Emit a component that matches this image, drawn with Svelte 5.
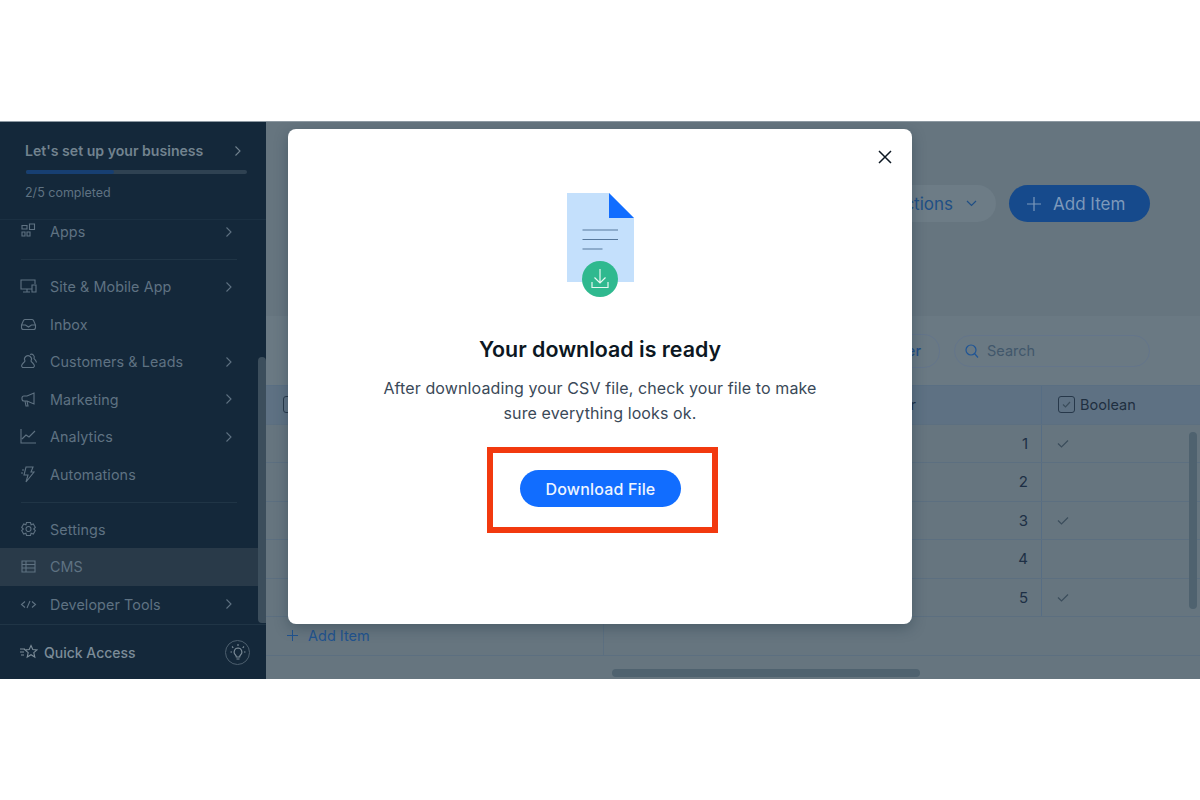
<script>
  // Download-ready dialog sitting on top of a dimmed CMS dashboard
  const navGroups = [
    [{ label: 'Apps', icon: 'apps', more: true }],
    [
      { label: 'Site & Mobile App', icon: 'site', more: true },
      { label: 'Inbox', icon: 'inbox' },
      { label: 'Customers & Leads', icon: 'people', more: true },
      { label: 'Marketing', icon: 'megaphone', more: true },
      { label: 'Analytics', icon: 'chart', more: true },
      { label: 'Automations', icon: 'bolt' }
    ],
    [
      { label: 'Settings', icon: 'gear' },
      { label: 'CMS', icon: 'table', active: true },
      { label: 'Developer Tools', icon: 'code', more: true }
    ]
  ];

  const icons = {
    apps: 'M3 7h5V3.500H3zM3 14h3v-4H3zM8 14h3v-4H8zM10.500 7.500h5V2h-5z',
    site: 'M13 12H2V3h14v4M8 12v3M4 15h7M13 8h4v7h-4z',
    inbox: 'M2.500 10l2-4.500a2 2 0 0 1 2-1h6a2 2 0 0 1 2 1l2 4.500v2.500a2 2 0 0 1-2 2h-10a2 2 0 0 1-2-2zM2.500 10h4l3 2 3-2h4',
    people: 'M6 9a3.500 3.500 0 1 1 6 0c1 2 3 2 3.500 5l-1 1.500H3.500l-1-1.500C3 11 5 11 6 9zM11 2.500a3 3 0 0 1 4 4c1 1.500 2 2 2.500 4',
    megaphone: 'M5 6h3l7-3v11l-7-3H5a2 2 0 0 1-2-2V8a2 2 0 0 1 2-2zM6 11l1 5h2l-1-5',
    chart: 'M2 2v14h15M3 12l4-4 3 2 6-6',
    bolt: 'M7 2h7l-2 5h3l-8 10 2-7H5zM3 5h2M2 8h2',
    gear: 'M9.500 6.500a2.500 2.500 0 1 0 0 5 2.500 2.500 0 0 0 0-5zM7.500 2.500h4l.6 2.200 2.200-.8 2 3.400L14.700 9l1.600 1.700-2 3.400-2.200-.8-.6 2.200h-4l-.6-2.200-2.200.8-2-3.400L4.300 9 2.700 7.300l2-3.400 2.200.8z',
    table: 'M3 4h13v11H3zM3 7.500h13M3 11h13M7 4v11',
    code: 'M6 6.500L2.500 9.500 6 12.500M13 6.500l3.500 3-3.500 3M11 6L8 13'
  };

  const rows = [
    { n: 1, on: true },
    { n: 2, on: false },
    { n: 3, on: true },
    { n: 4, on: false },
    { n: 5, on: true }
  ];
</script>

<div class="page">
  <div class="frame">
    <aside class="sidebar">
      <div class="setup">
        <div class="setup-title">
          <span>Let's set up your business</span>
          <svg width="8" height="12" viewBox="0 0 8 12"><path d="M1.500 1.500L6 6l-4.500 4.500" /></svg>
        </div>
        <div class="progress"><div class="progress-fill" style="width: 40%"></div></div>
        <div class="setup-sub">2/5 completed</div>
      </div>

      <nav class="nav">
        {#each navGroups as group, i}
          <ul class="nav-group" class:first={i === 0}>
            {#each group as item}
              <li class="nav-item" class:active={item.active}>
                <svg class="nav-icon" width="19" height="19" viewBox="0 0 19 19"><path d={icons[item.icon]} /></svg>
                <span class="nav-label">{item.label}</span>
                {#if item.more}
                  <svg class="chev" width="8" height="12" viewBox="0 0 8 12"><path d="M1.500 1.500L6 6l-4.500 4.500" /></svg>
                {/if}
              </li>
            {/each}
          </ul>
        {/each}
        <div class="nav-scroll"></div>
      </nav>

      <div class="quick">
        <svg class="quick-icon" width="18" height="16" viewBox="0 0 18 16"><path d="M0 5h5M0 8h4M1 11h3M11 1.500l1.800 4 4.200.4-3.200 2.800 1 4.300-3.800-2.300-3.800 2.300 1-4.300L5 5.900l4.200-.4z" /></svg>
        <span class="quick-label">Quick Access</span>
        <span class="bulb">
          <svg width="18" height="18" viewBox="0 0 18 18"><path d="M9 5a4 4 0 0 0-2.500 7c.6.600.8 1.200.8 2h3.400c0-.8.2-1.400.8-2A4 4 0 0 0 9 5zM7.500 16h3M9 1v2M3 3.500l1.300 1.300M15 3.500l-1.300 1.300M1.500 9h1.500M15 9h1.500" /></svg>
        </span>
      </div>
    </aside>

    <main class="main">
      <header class="head">
        <button class="pill ghost">More Actions
          <svg width="11" height="7" viewBox="0 0 11 7"><path d="M1 1l4.500 4.500L10 1" /></svg>
        </button>
        <button class="pill primary">
          <svg width="16" height="16" viewBox="0 0 16 16"><path d="M8 1v14M1 8h14" /></svg>
          Add Item
        </button>
      </header>

      <section class="tools">
        <span class="filter">Filter</span>
        <div class="search">
          <svg width="16" height="16" viewBox="0 0 16 16"><circle cx="7" cy="7" r="5" /><path d="M10.500 10.500L14 14.500" /></svg>
          <span>Search</span>
        </div>
      </section>

      <section class="table">
        <div class="tr th">
          <div class="cell first"><span class="box small"></span></div>
          <div class="cell num-head">Number</div>
          <div class="cell bool">
            <span class="box">
              <svg width="9" height="7" viewBox="0 0 9 7"><path d="M1 3.500L3.500 6 8 1" /></svg>
            </span>
            Boolean
          </div>
        </div>
        {#each rows as row}
          <div class="tr">
            <div class="cell first"></div>
            <div class="cell num">{row.n}</div>
            <div class="cell bool">
              {#if row.on}
                <svg class="tick" width="12" height="9" viewBox="0 0 12 9"><path d="M1 4.500L4.500 8 11 1.500" /></svg>
              {/if}
            </div>
          </div>
        {/each}
        <div class="tr">
          <div class="cell first add">
            <svg width="11" height="11" viewBox="0 0 11 11"><path d="M5.500 0v11M0 5.500h11" /></svg>
            <span>Add Item</span>
          </div>
          <div class="cell plain"></div>
        </div>
        <div class="tail"><div class="hbar"></div></div>
        <div class="vbar"></div>
      </section>
    </main>

    <div class="modal">
      <button class="close" aria-label="Close">
        <svg width="14" height="14" viewBox="0 0 14 14"><path d="M1 1l12 12M13 1L1 13" /></svg>
      </button>

      <svg class="art" width="68" height="104" viewBox="0 0 68 104">
        <path d="M0 0h42l25 25v64H0z" fill="#c4e0fc" />
        <path d="M42 0l25 25H42z" fill="#116dff" />
        <path d="M15.500 37h35.500M15.500 46.500h35.500M15.500 56h20" stroke="#56789c" stroke-width="1.200" fill="none" />
        <circle cx="33" cy="86" r="18" fill="#2fb98f" />
        <path d="M33 76v13.500M27.500 84.500l5.500 5.500 5.500-5.500M25 89v5.500h16V89" stroke="#e6f7f1" stroke-width="1.200" fill="none" />
      </svg>

      <h2>Your download is ready</h2>
      <p>After downloading your CSV file, check your file to make<br />sure everything looks ok.</p>

      <div class="callout">
        <button class="download">Download File</button>
      </div>
    </div>
  </div>
</div>

<style>
  :global(body) {
    margin: 0;
    background: #fff;
  }

  .page {
    height: 800px;
    padding-top: 121px;
    box-sizing: border-box;
    font-family: Inter, "Liberation Sans", sans-serif;
  }

  .frame {
    position: relative;
    height: 558px;
    display: flex;
    background: #66757f;
    border-top: 1px solid #8d99a2;
    box-sizing: border-box;
    overflow: hidden;
  }

  /* sidebar */
  .sidebar {
    width: 266px;
    flex: none;
    display: flex;
    flex-direction: column;
    background: #14283a;
    color: #5f7282;
    font-size: 14.300px;
  }

  .sidebar svg path {
    fill: none;
    stroke: currentColor;
    stroke-width: 1.100;
  }

  .setup {
    height: 98px;
    box-sizing: border-box;
    padding: 20px 19px 0 25px;
    border-bottom: 1px solid #1b3042;
  }

  .setup-title {
    display: flex;
    justify-content: space-between;
    align-items: center;
    font-weight: 600;
    color: #72838f;
    font-size: 14.100px;
    line-height: 18px;
    padding-right: 5px;
  }

  .progress {
    height: 4px;
    margin: 10px 0 0 1px;
    background: #2f4252;
    border-radius: 2px;
    width: 221px;
  }

  .progress-fill {
    height: 100%;
    background: #173f72;
    border-radius: 2px;
  }

  .setup-sub {
    margin-top: 11px;
    font-size: 12.500px;
    line-height: 16px;
  }

  .nav {
    position: relative;
    flex: 1;
    min-height: 0;
  }

  .nav-group {
    list-style: none;
    margin: 0;
    padding: 0;
  }

  .nav-group + .nav-group {
    margin-top: 8.500px;
    padding-top: 9px;
    position: relative;
  }

  .nav-group + .nav-group::before {
    content: "";
    position: absolute;
    top: 0;
    left: 21px;
    width: 216px;
    height: 1px;
    background: #203546;
  }

  .nav-group.first {
    margin-top: -7px;
  }

  .nav-item {
    display: flex;
    align-items: center;
    height: 37.500px;
    padding: 0 33px 0 19px;
  }

  .nav-item.active {
    background: #293a49;
    margin-right: 8px;
    padding-right: 25px;
  }

  .nav-icon {
    flex: none;
  }

  .nav-label {
    flex: 1;
    margin-left: 12px;
    letter-spacing: 0.100px;
  }

  .chev {
    flex: none;
  }

  .nav-scroll {
    position: absolute;
    right: 0;
    top: 137px;
    bottom: 1px;
    width: 8px;
    border-radius: 4px 4px 0 4px;
    background: #3c4e5c;
  }

  .quick {
    height: 55px;
    flex: none;
    box-sizing: border-box;
    display: flex;
    align-items: center;
    padding: 0 16px 0 20px;
    border-top: 1px solid #203546;
    color: #7c8c98;
  }

  .quick-label {
    flex: 1;
    margin-left: 6px;
    font-size: 14px;
    font-weight: 500;
  }

  .bulb {
    width: 25px;
    height: 25px;
    box-sizing: border-box;
    border: 1px solid #4d5f6e;
    border-radius: 50%;
    display: flex;
    align-items: center;
    justify-content: center;
  }

  /* dimmed page behind the dialog */
  .main {
    flex: 1;
    min-width: 0;
    display: flex;
    flex-direction: column;
    color: #1d2f45;
  }

  .head {
    height: 194px;
    flex: none;
    box-sizing: border-box;
    display: flex;
    justify-content: flex-end;
    gap: 13px;
    padding: 63px 50px 0 0;
  }

  .pill {
    height: 37px;
    border: 0;
    border-radius: 19px;
    display: flex;
    align-items: center;
    font: 400 17px Inter, "Liberation Sans", sans-serif;
  }

  .pill.ghost {
    width: 170px;
    justify-content: flex-end;
    gap: 13px;
    padding-right: 19px;
    box-sizing: border-box;
    background: #6d7c86;
    color: #204f85;
  }

  .pill.ghost path {
    fill: none;
    stroke: #204f85;
    stroke-width: 1.200;
  }

  .pill.primary {
    width: 141px;
    justify-content: flex-start;
    gap: 11px;
    padding-left: 17px;
    box-sizing: border-box;
    background: #164a8c;
    color: #7d99bb;
  }

  .pill.primary path {
    fill: none;
    stroke: #7d99bb;
    stroke-width: 1.200;
  }

  .tools {
    height: 70px;
    flex: none;
    box-sizing: border-box;
    display: flex;
    justify-content: flex-end;
    align-items: center;
    gap: 14px;
    padding: 0 50px 0 0;
    background: #6a7983;
    border-bottom: 1px solid #5a6f83;
  }

  .filter {
    font-size: 14.500px;
    font-weight: 500;
    color: #1f4d85;
    height: 32px;
    line-height: 32px;
    padding: 0 18px 0 16px;
    border: 1px solid #64758a;
    border-radius: 16px;
  }

  .search {
    width: 196px;
    height: 32px;
    box-sizing: border-box;
    display: flex;
    align-items: center;
    gap: 7px;
    padding-left: 9px;
    border: 1px solid #64758a;
    border-radius: 16px;
    font-size: 14.500px;
    color: #41576b;
  }

  .search circle,
  .search path {
    fill: none;
    stroke: #1f5596;
    stroke-width: 1.200;
  }

  .table {
    position: relative;
    flex: 1;
    min-height: 0;
  }

  .tr {
    display: flex;
    height: 38.500px;
    box-sizing: border-box;
    border-bottom: 1px solid #5c6f80;
  }

  .tr.th {
    background: #5e7183;
  }

  .cell {
    display: flex;
    align-items: center;
    box-sizing: border-box;
    font-size: 14.500px;
  }

  .cell.first {
    width: 338px;
    flex: none;
    padding-left: 17px;
    border-right: 1px solid #5c6f80;
  }

  .num-head,
  .num {
    width: 438px;
    flex: none;
    justify-content: flex-end;
    border-right: 1px solid #566d84;
  }

  .num-head {
    padding-right: 125px;
  }

  .num {
    padding-right: 13px;
    font-size: 15px;
  }

  .bool {
    flex: 1;
    gap: 5px;
    padding-left: 16px;
    color: #1e2f40;
  }

  .plain {
    flex: 1;
  }

  .box {
    width: 17px;
    height: 17px;
    box-sizing: border-box;
    border: 1px solid #27384a;
    border-radius: 3px;
    display: flex;
    align-items: center;
    justify-content: center;
  }

  .box path,
  .tick path {
    fill: none;
    stroke: #3b4d5c;
    stroke-width: 1.200;
  }

  .tick {
    margin-left: -1px;
  }

  .cell.first.add {
    gap: 10px;
    padding-left: 21px;
    color: #21538f;
  }

  .add path {
    fill: none;
    stroke: #21538f;
    stroke-width: 1;
  }

  .tail {
    position: relative;
    height: 24px;
  }

  .hbar {
    position: absolute;
    left: 346px;
    top: 13px;
    width: 308px;
    height: 8px;
    border-radius: 4px;
    background: #4f626f;
  }

  .vbar {
    position: absolute;
    right: 3px;
    top: 46px;
    width: 8px;
    height: 177px;
    border-radius: 4px;
    background: #4f626f;
  }

  /* dialog */
  .modal {
    position: absolute;
    left: 288px;
    top: 7px;
    width: 624px;
    height: 495px;
    box-sizing: border-box;
    padding-top: 64px;
    display: flex;
    flex-direction: column;
    align-items: center;
    background: #fff;
    border-radius: 8px;
    box-shadow: 0 4px 14px rgba(22, 45, 61, 0.35);
    color: #1b2a3a;
  }

  .close {
    position: absolute;
    top: 21px;
    right: 20px;
    width: 14px;
    height: 14px;
    padding: 0;
    border: 0;
    background: none;
    display: flex;
  }

  .close path {
    fill: none;
    stroke: #0c1722;
    stroke-width: 1.500;
  }

  .art {
    display: block;
    margin-left: 2px;
  }

  h2 {
    margin: 38px 0 0;
    font-size: 21.400px;
    line-height: 28px;
    font-weight: 600;
    color: #0c1722;
  }

  p {
    margin: 13px 0 0;
    font-size: 16px;
    letter-spacing: 0.110px;
    line-height: 25px;
    text-align: center;
    color: #3a4958;
  }

  .callout {
    margin: 21px 0 0 5px;
    padding: 17px 31px 20px 27px;
    border: 6px solid #f2390f;
    display: flex;
  }

  .download {
    width: 161px;
    height: 37px;
    border: 0;
    border-radius: 19px;
    background: #116dff;
    color: #eef5ff;
    letter-spacing: 0.150px;
    font: 500 16px Inter, "Liberation Sans", sans-serif;
  }
</style>
